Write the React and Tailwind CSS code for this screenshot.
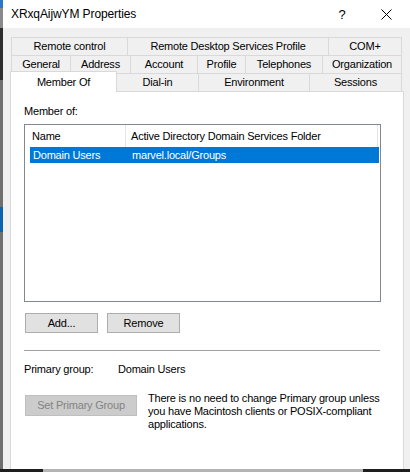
import React from "react";

const rowOne = [
  { label: "Remote control", w: "w-[116px]" },
  { label: "Remote Desktop Services Profile", w: "w-[201px]" },
  { label: "COM+", w: "w-[74px]" },
];

const rowTwo = [
  { label: "General", w: "w-[59px]" },
  { label: "Address", w: "w-[60px]" },
  { label: "Account", w: "w-[67px]" },
  { label: "Profile", w: "w-[48px]" },
  { label: "Telephones", w: "w-[77px]" },
  { label: "Organization", w: "w-[80px]" },
];

const rowThree = [
  { label: "Dial-in", w: "w-[81px]" },
  { label: "Environment", w: "w-[111px]" },
  { label: "Sessions", w: "w-[93px]" },
];

function Tab({ label, w, last }) {
  return (
    <div
      className={`${w} h-[18px] flex items-center justify-center border-t border-l border-[#d9d9d9] bg-[#f0f0f0] ${
        last ? "border-r" : ""
      }`}
    >
      {label}
    </div>
  );
}

function TabRow({ tabs }) {
  return (
    <div className="flex ml-px">
      {tabs.map((t, i) => (
        <Tab key={t.label} {...t} last={i === tabs.length - 1} />
      ))}
    </div>
  );
}

export default function App() {
  return (
    <div className="w-[410px] h-[472px] overflow-hidden flex flex-col font-['Liberation_Sans',Arial,sans-serif] text-[11px] tracking-[-0.2px] leading-[13px] text-black">
      <div className="flex h-[469px]">
        {/* desktop peeking out on the left */}
        <div className="w-[3px] flex flex-col">
          <div className="h-[8px] bg-[#2a78c8]" />
          <div className="h-[20px] bg-[#8a8a8a]" />
          <div className="h-[52px] bg-[#2e2e2e]" />
          <div className="h-[127px] bg-[#6f6f6f]" />
          <div className="h-[25px] bg-[#0a64ad]" />
          <div className="flex-1 bg-[#6f6f6f]" />
        </div>

        <div className="flex-1 flex flex-col bg-[#f0f0f0]">
          <div className="h-[28px] bg-white flex items-center pl-[8px] pr-[2px]">
            <span className="flex-1 text-[12px] tracking-[-0.1px]">XRxqAijwYM Properties</span>
            <span className="w-[44px] text-center text-[13px]">?</span>
            <span className="w-[44px] flex justify-center">
              <svg width="11" height="11" viewBox="0 0 11 11">
                <path d="M0.5 0.5L10.5 10.5M10.5 0.5L0.5 10.5" stroke="#000" strokeWidth="1" />
              </svg>
            </span>
          </div>

          <div className="flex-1 flex flex-col pl-[7px] pt-[9px]">
            <TabRow tabs={rowOne} />
            <TabRow tabs={rowTwo} />
            <div className="flex items-end h-[20px] -mt-[2px] relative z-10">
              <div className="w-[107px] h-[21px] -mb-px flex items-center justify-center bg-white border-t border-l border-r border-[#d9d9d9]">
                Member Of
              </div>
              <div className="flex">
                {rowThree.map((t, i) => (
                  <div
                    key={t.label}
                    className={`${t.w} h-[18px] flex items-center justify-center border-t border-[#d9d9d9] bg-[#f0f0f0] ${
                      i > 0 ? "border-l" : ""
                    } ${i === rowThree.length - 1 ? "border-r" : ""}`}
                  >
                    {t.label}
                  </div>
                ))}
              </div>
            </div>

            <div className="w-[394px] flex-1 bg-white border border-b-0 border-[#d9d9d9] flex flex-col pl-[13px]">
              <div className="mt-[13px]">Member of:</div>

              <div className="mt-[6px] w-[357px] h-[178px] border border-[#828790] flex flex-col">
                <div className="h-[22px] flex">
                  <div className="w-[101px] flex items-center pl-[7px] border-r border-[#e5e5e5]">Name</div>
                  <div className="w-[252px] flex items-center pl-[5px] border-r border-[#e5e5e5]">
                    Active Directory Domain Services Folder
                  </div>
                </div>
                <div className="ml-[5px] w-[349px] h-[16px] flex items-center bg-[#0078d7] text-white">
                  <div className="w-[99px] pl-[3px]">Domain Users</div>
                  <div className="pl-[3px]">marvel.local/Groups</div>
                </div>
              </div>

              <div className="mt-[11px] ml-px flex gap-[9px]">
                <button className="w-[73px] h-[20px] bg-[#e1e1e1] border border-[#adadad] flex items-center justify-center">
                  Add...
                </button>
                <button className="w-[73px] h-[20px] bg-[#e1e1e1] border border-[#adadad] flex items-center justify-center">
                  Remove
                </button>
              </div>

              <div className="mt-[17px] w-[356px] h-px bg-[#a0a0a0]" />

              <div className="mt-[12px] flex">
                <span className="w-[94px]">Primary group:</span>
                <span>Domain Users</span>
              </div>

              <div className="mt-[16px] flex items-start">
                <button
                  disabled
                  className="mt-[3px] ml-px w-[112px] h-[21px] bg-[#cccccc] border border-[#bfbfbf] text-[#838383] flex items-center justify-center"
                >
                  Set Primary Group
                </button>
                <p className="ml-[11px] w-[240px]">
                  There is no need to change Primary group unless you have Macintosh clients or POSIX-compliant
                  applications.
                </p>
              </div>
            </div>
          </div>
        </div>
      </div>

      <div className="h-[3px] flex">
        <div className="w-[43px] bg-[#1e1e1e]" />
        <div className="w-[320px] bg-[#b4b4b4]" />
        <div className="flex-1 bg-[#1e1e1e]" />
      </div>
    </div>
  );
}
